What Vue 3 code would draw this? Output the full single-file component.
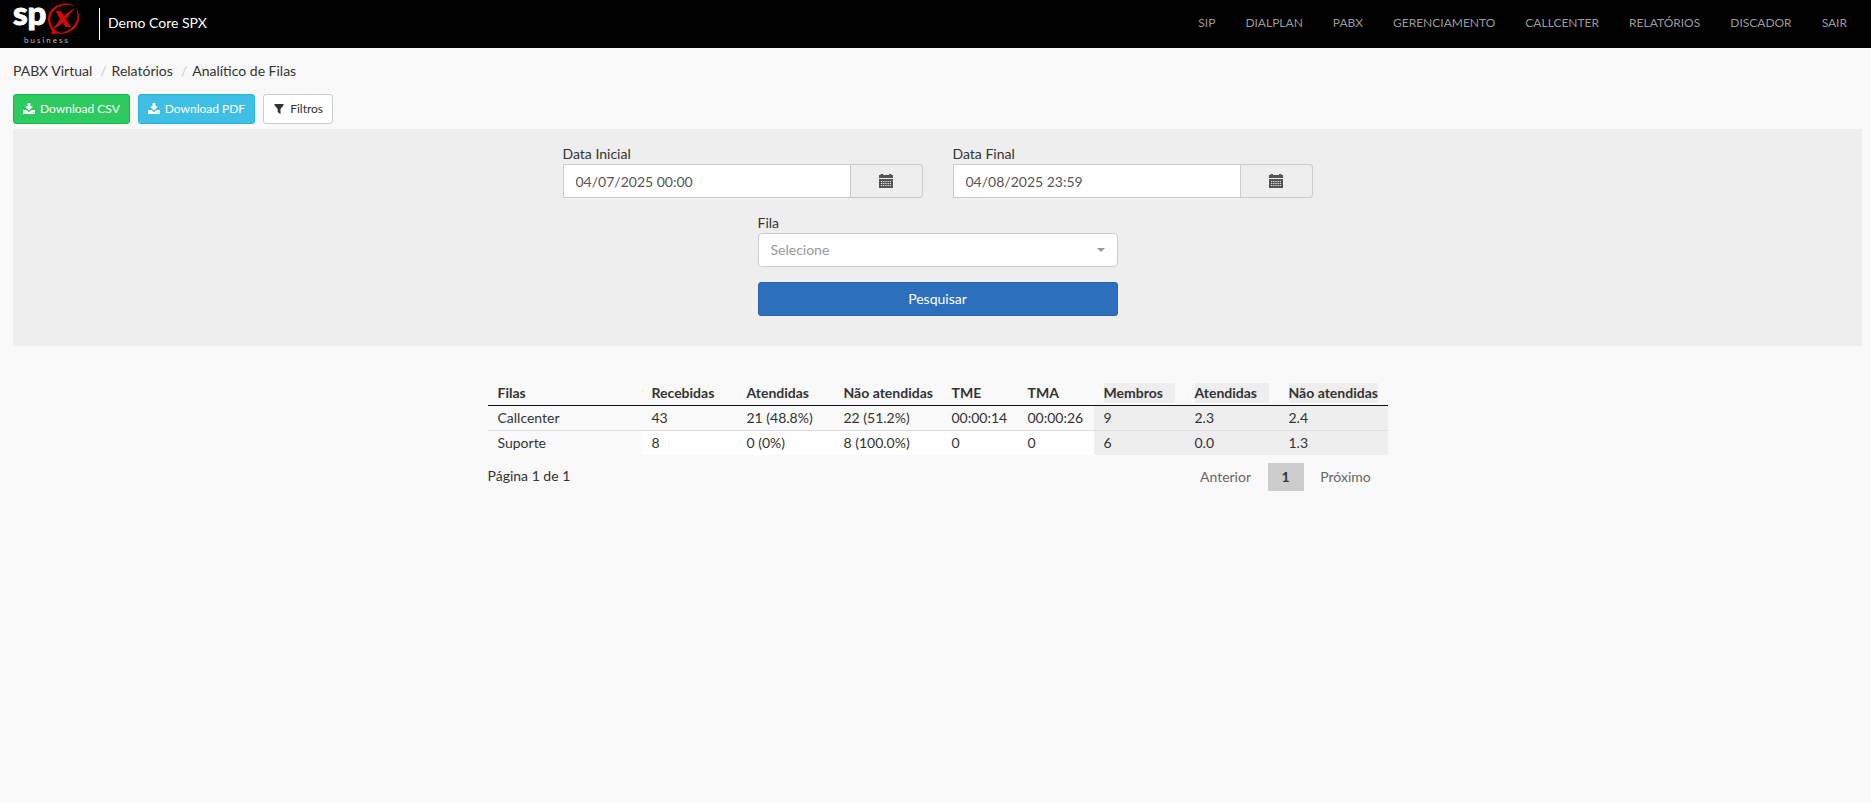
<script setup>
import { ref } from 'vue'

const menu = ['SIP', 'DIALPLAN', 'PABX', 'GERENCIAMENTO', 'CALLCENTER', 'RELATÓRIOS', 'DISCADOR', 'SAIR']
const crumbs = ['PABX Virtual', 'Relatórios', 'Analítico de Filas']
const dates = ref([
  { id: 'data-inicial', label: 'Data Inicial', value: '04/07/2025 00:00' },
  { id: 'data-final', label: 'Data Final', value: '04/08/2025 23:59' },
])
const columns = [
  { label: 'Filas', name: 'queue' },
  { label: 'Recebidas', name: 'received' },
  { label: 'Atendidas', name: 'answered' },
  { label: 'Não atendidas', name: 'missed' },
  { label: 'TME', name: 'time' },
  { label: 'TMA', name: 'time' },
  { label: 'Membros', name: 'members', shaded: true },
  { label: 'Atendidas', name: 'avg-answered', shaded: true },
  { label: 'Não atendidas', name: 'avg-missed', shaded: true },
]
const rows = [
  ['Callcenter', '43', '21 (48.8%)', '22 (51.2%)', '00:00:14', '00:00:26', '9', '2.3', '2.4'],
  ['Suporte', '8', '0 (0%)', '8 (100.0%)', '0', '0', '6', '0.0', '1.3'],
]
const filtersOpen = ref(true)
const queue = ref('')
</script>

<template>
  <header class="topbar">
    <a href="#" class="brand" aria-label="SPX business">
      <svg class="logo" viewBox="0 0 68 48" aria-hidden="true">
        <text class="logo-sp" x="0" y="25">sp</text>
        <path d="M37 27 C31 16 39 4 52 3.500 C56 3.300 60 4.500 62 7 C56 4 49 4.500 44 8 C37 13 36 20 39 26 C41 30 44 32 48 32 C44 34 41 34 38 34.500 C40 32 38 29 37 27 Z" fill="#c40a0a" />
        <path d="M63 8 C69 16 66 27 58 31 C54 33.500 48 34.500 43 33.500 C52 33.500 59 29 62.500 23 C65 18 65 13 63 8 Z" fill="#c40a0a" />
        <path d="M42 11.500 C46 10.500 48 11 49.500 13.500 L51 16 C54 13 57 10.500 62 8.500 C58.500 12 55.500 15.500 53 19 L58 27 L52.500 27 L49.500 22.500 C47 25.500 43 28 39 29.500 C42 26.500 44.500 22.500 47 19 L44.500 14.500 C44 13 43.500 12 42 11.500 Z" fill="#d00a0a" />
        <text class="logo-sub" x="11" y="43">business</text>
      </svg>
    </a>
    <span class="company">Demo Core SPX</span>
    <nav class="menu">
      <a v-for="item in menu" :key="item" href="#">{{ item }}</a>
    </nav>
  </header>

  <main class="content">
    <nav class="crumbs" aria-label="Navegação">
      <template v-for="(crumb, i) in crumbs" :key="crumb">
        <span v-if="i" class="slash">/</span>
        <a href="#">{{ crumb }}</a>
      </template>
    </nav>

    <div class="actions">
      <button type="button" class="btn green">
        <svg class="icon" viewBox="0 0 12 12" aria-hidden="true"><path fill="currentColor" fill-rule="evenodd" d="M4.500 0h3v3.500H10L6 7.500 2 3.500h2.500zM0 7h3.500L6 9.300 8.500 7H12v4H0zM8.500 9.300v.8h.8v-.8zM10.200 9.300v.8h.8v-.8z" /></svg>
        Download CSV
      </button>
      <button type="button" class="btn blue">
        <svg class="icon" viewBox="0 0 12 12" aria-hidden="true"><path fill="currentColor" fill-rule="evenodd" d="M4.500 0h3v3.500H10L6 7.500 2 3.500h2.500zM0 7h3.500L6 9.300 8.500 7H12v4H0zM8.500 9.300v.8h.8v-.8zM10.200 9.300v.8h.8v-.8z" /></svg>
        Download PDF
      </button>
      <button type="button" class="btn plain" @click="filtersOpen = !filtersOpen">
        <svg class="icon" viewBox="0 0 12 12" aria-hidden="true"><path fill="currentColor" d="M1.500 1h9v1.300L7.500 6v5.200L4.700 9V6L1.500 2.300z" /></svg>
        Filtros
      </button>
    </div>

    <form v-show="filtersOpen" class="filters" @submit.prevent>
      <div class="dates">
        <div v-for="d in dates" :key="d.id" class="field">
          <label :for="d.id">{{ d.label }}</label>
          <div class="group">
            <input :id="d.id" v-model="d.value" type="text" />
            <button type="button" class="addon" :aria-label="'Abrir calendário: ' + d.label">
              <svg class="calendar" viewBox="0 0 14 14" aria-hidden="true">
                <path fill="currentColor" fill-rule="evenodd" d="M0 1h1.500V0H4v1h6V0h2.500v1H14v3H0zM0 5h14v9H0zM2 7v1h1.200V7zm2.200 0v1h1.200V7zm2.200 0v1h1.200V7zm2.200 0v1h1.200V7zm2.200 0v1H12V7zM2 9v1h1.200V9zm2.200 0v1h1.200V9zm2.200 0v1h1.200V9zm2.200 0v1h1.200V9zm2.200 0v1H12V9zM2 11v1h1.200v-1zm2.200 0v1h1.200v-1zm2.200 0v1h1.200v-1zm2.200 0v1h1.200v-1zm2.200 0v1H12v-1z" />
              </svg>
            </button>
          </div>
        </div>
      </div>
      <div class="field">
        <label for="fila">Fila</label>
        <div class="select">
          <select id="fila" v-model="queue">
            <option value="">Selecione</option>
            <option>Callcenter</option>
            <option>Suporte</option>
          </select>
        </div>
      </div>
      <button type="submit" class="search">Pesquisar</button>
    </form>

    <section class="report">
      <table>
        <thead>
          <tr>
            <th v-for="(c, i) in columns" :key="i" scope="col" :class="['col-' + c.name, { shaded: c.shaded }]">{{ c.label }}</th>
          </tr>
        </thead>
        <tbody>
          <tr v-for="row in rows" :key="row[0]">
            <td v-for="(cell, i) in row" :key="i" :class="{ shaded: columns[i].shaded }">{{ cell }}</td>
          </tr>
        </tbody>
      </table>
      <div class="pager">
        <span>Página 1 de 1</span>
        <nav class="pages" aria-label="Paginação">
          <button type="button">Anterior</button>
          <button type="button" class="current" aria-current="page">1</button>
          <button type="button">Próximo</button>
        </nav>
      </div>
    </section>
  </main>
</template>

<style>
body {
  margin: 0;
  background: #f9f9f9;
}
</style>

<style scoped>
.topbar,
.content {
  font-family: Lato, "Liberation Sans", sans-serif;
  font-size: 14px;
  line-height: 20px;
  color: #333;
}
.topbar *,
.content * {
  box-sizing: border-box;
}
button,
input,
select {
  margin: 0;
  font: inherit;
  color: inherit;
}
button {
  cursor: pointer;
}
a {
  color: inherit;
  text-decoration: none;
}
.topbar {
  display: flex;
  align-items: center;
  height: 48px;
  padding: 0 9px 0 13px;
  background: #000;
  color: #fff;
}
.logo {
  display: block;
  width: 68px;
  height: 48px;
  overflow: visible;
}
.logo-sp {
  font-size: 33px;
  font-weight: 900;
  fill: #fff;
  stroke: #fff;
  stroke-width: 1px;
}
.logo-sub {
  font-size: 8px;
  letter-spacing: 2px;
  fill: #bbb;
}
.company {
  margin-left: 18px;
  padding: 5px 0 7px 8px;
  border-left: 1px solid #fff;
}
.menu {
  display: flex;
  margin-left: auto;
  font-size: 12px;
  color: #999;
}
.menu a {
  padding: 0 15px 2px;
}
.content {
  padding: 13px 9px 0 13px;
}
.crumbs {
  display: flex;
}
.slash {
  padding: 0 5px 0 8px;
  color: #ccc;
}
.actions {
  display: flex;
  gap: 8px;
  margin: 13px 0 5px;
}
.btn {
  display: flex;
  align-items: center;
  gap: 5px;
  height: 30px;
  padding: 0 9px;
  border: 1px solid;
  border-radius: 3px;
  font-size: 12px;
}
.icon {
  width: 12px;
  height: 12px;
}
.green {
  background: #2dca5f;
  border-color: #12b950;
  color: #fff;
}
.blue {
  background: #40bfe5;
  border-color: #22b5e0;
  color: #fff;
}
.plain {
  background: #fff;
  border-color: #ccc;
}
.filters {
  display: flex;
  flex-direction: column;
  align-items: center;
  gap: 15px;
  padding: 15px 0 30px;
  background: #eee;
}
.dates {
  display: flex;
  gap: 30px;
}
.field,
.search {
  width: 360px;
}
.field label {
  display: block;
}
.group {
  display: flex;
}
.group input {
  flex: 1;
  min-width: 0;
  height: 34px;
  padding: 0 12px;
  border: 1px solid #ccc;
  background: #fff;
  color: #555;
}
.addon {
  display: flex;
  align-items: center;
  justify-content: center;
  width: 72px;
  padding: 0;
  border: 1px solid #ccc;
  border-left: 0;
  border-radius: 0 4px 4px 0;
  background: #eee;
  color: #555;
}
.calendar {
  width: 14px;
  height: 14px;
}
.select {
  display: flex;
  position: relative;
}
.select::after {
  content: "";
  position: absolute;
  top: 15px;
  right: 13px;
  border: 4px solid transparent;
  border-top-color: #999;
  border-bottom: 0;
  pointer-events: none;
}
select {
  appearance: none;
  width: 100%;
  height: 34px;
  padding: 0 12px;
  border: 1px solid #ccc;
  border-radius: 4px;
  background: #fff;
  color: #999;
}
.search {
  height: 34px;
  border: 1px solid #2865ae;
  border-radius: 3px;
  background: #2c6fbb;
  color: #fff;
}
.report {
  max-width: 900px;
  margin: 35px auto 0;
}
table {
  width: 100%;
  table-layout: fixed;
  border-collapse: separate;
  border-spacing: 0;
}
th,
td {
  padding: 2px 10px;
  text-align: left;
  white-space: nowrap;
}
th {
  border-bottom: 1px solid #111;
  font-weight: 700;
}
th.shaded {
  background: #eee content-box;
}
td {
  background: #fff;
}
tr:first-child td,
td:first-child {
  background: #fafafa;
}
tr + tr td {
  border-top: 1px solid #ddd;
}
tr td.shaded {
  background: #eee;
}
.col-queue { width: 154px; }
.col-received { width: 95px; }
.col-answered { width: 97px; }
.col-missed { width: 108px; }
.col-time { width: 76px; }
.col-members { width: 91px; }
.col-avg-answered { width: 94px; }
.col-avg-missed { width: 109px; }
.pager {
  display: flex;
  justify-content: space-between;
  padding-top: 8px;
}
.pager > span {
  padding-top: 3px;
}
.pages {
  display: flex;
}
.pages button {
  min-width: 84px;
  padding: 4px 0;
  border: 0;
  background: none;
  color: #666;
}
.pages .current {
  min-width: 36px;
  background: #ccc;
  color: #333;
  font-weight: 700;
}
</style>
